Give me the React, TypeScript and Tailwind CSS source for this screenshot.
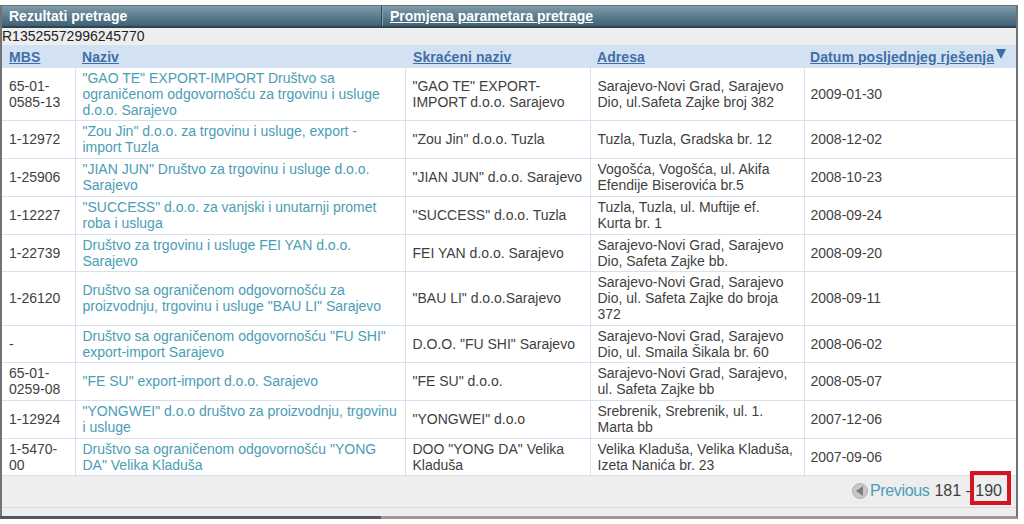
const rows = [
  { mbs: ["65-01-", "0585-13"], naziv: ['"GAO TE" EXPORT-IMPORT Društvo sa', "ograničenom odgovornošću za trgovinu i usluge", "d.o.o. Sarajevo"], skraceni: ['"GAO TE" EXPORT-', "IMPORT d.o.o. Sarajevo"], adresa: ["Sarajevo-Novi Grad, Sarajevo", "Dio, ul.Safeta Zajke broj 382"], datum: "2009-01-30", h: "h-[52px]" },
  { mbs: ["1-12972"], naziv: ['"Zou Jin" d.o.o. za trgovinu i usluge, export -', "import Tuzla"], skraceni: ['"Zou Jin" d.o.o. Tuzla'], adresa: ["Tuzla, Tuzla, Gradska br. 12"], datum: "2008-12-02", h: "h-[38px]" },
  { mbs: ["1-25906"], naziv: ['"JIAN JUN" Društvo za trgovinu i usluge d.o.o.', "Sarajevo"], skraceni: ['"JIAN JUN" d.o.o. Sarajevo'], adresa: ["Vogošća, Vogošća, ul. Akifa", "Efendije Biserovića br.5"], datum: "2008-10-23", h: "h-[38px]" },
  { mbs: ["1-12227"], naziv: ['"SUCCESS" d.o.o. za vanjski i unutarnji promet', "roba i usluga"], skraceni: ['"SUCCESS" d.o.o. Tuzla'], adresa: ["Tuzla, Tuzla, ul. Muftije ef.", "Kurta br. 1"], datum: "2008-09-24", h: "h-[38px]" },
  { mbs: ["1-22739"], naziv: ["Društvo za trgovinu i usluge FEI YAN d.o.o.", "Sarajevo"], skraceni: ["FEI YAN d.o.o. Sarajevo"], adresa: ["Sarajevo-Novi Grad, Sarajevo", "Dio, Safeta Zajke bb."], datum: "2008-09-20", h: "h-[37px]" },
  { mbs: ["1-26120"], naziv: ["Društvo sa ograničenom odgovornošću za", 'proizvodnju, trgovinu i usluge "BAU LI" Sarajevo'], skraceni: ['"BAU LI" d.o.o.Sarajevo'], adresa: ["Sarajevo-Novi Grad, Sarajevo", "Dio, ul. Safeta Zajke do broja", "372"], datum: "2008-09-11", h: "h-[54px]" },
  { mbs: ["-"], naziv: ['Društvo sa ograničenom odgovornošću "FU SHI"', "export-import Sarajevo"], skraceni: ['D.O.O. "FU SHI" Sarajevo'], adresa: ["Sarajevo-Novi Grad, Sarajevo", "Dio, ul. Smaila Šikala br. 60"], datum: "2008-06-02", h: "h-[37px]" },
  { mbs: ["65-01-", "0259-08"], naziv: ['"FE SU" export-import d.o.o. Sarajevo'], skraceni: ['"FE SU" d.o.o.'], adresa: ["Sarajevo-Novi Grad, Sarajevo,", "ul. Safeta Zajke bb"], datum: "2008-05-07", h: "h-[38px]" },
  { mbs: ["1-12924"], naziv: ['"YONGWEI" d.o.o društvo za proizvodnju, trgovinu', "i usluge"], skraceni: ['"YONGWEI" d.o.o'], adresa: ["Srebrenik, Srebrenik, ul. 1.", "Marta bb"], datum: "2007-12-06", h: "h-[38px]" },
  { mbs: ["1-5470-", "00"], naziv: ['Društvo sa ograničenom odgovornošću "YONG', 'DA" Velika Kladuša'], skraceni: ['DOO "YONG DA" Velika', "Kladuša"], adresa: ["Velika Kladuša, Velika Kladuša,", "Izeta Nanića br. 23"], datum: "2007-09-06", h: "h-[37px]" },
];

function Lines({ items }: { items: string[] }) {
  return (
    <>
      {items.map((t) => (
        <div key={t} className="whitespace-nowrap">{t}</div>
      ))}
    </>
  );
}

const thLink = "font-bold underline text-[#3f6ea6] whitespace-nowrap tracking-[0.08px]";
const td = "pl-[7px] pr-0 py-0 border-r border-[#d5e1ee] align-middle";

export default function App() {
  return (
    <main className="w-[1024px] h-[524px] bg-white pt-[5px] overflow-hidden font-['Liberation_Sans',Arial,sans-serif] text-[14px] leading-[16px] text-[#3f3f3f]">
      <div className="relative w-[1018px] h-[514px] border-2 border-t border-[#6e7478] border-b-[3px] border-b-[#9a9a9a] bg-[#eeeeee] flex flex-col">
        <div className="flex h-[22px] border-b-2 border-[#2f4350] bg-gradient-to-b from-[#7f9cab] to-[#3f6074] text-white font-bold leading-[20px] shrink-0">
          <div className="w-[380px] pl-[7px] border-r border-[#2f4350]">Rezultati pretrage</div>
          <div className="flex-1 pl-[7px] border-l border-[#8aa3b0] underline">Promjena parametara pretrage</div>
        </div>
        <div className="h-[17px] leading-[17px] shrink-0 text-[#222222]">R13525572996245770</div>
        <table className="w-[1014px] table-fixed border-collapse bg-white">
          <colgroup>
            <col className="w-[73px]" />
            <col className="w-[330px]" />
            <col className="w-[185px]" />
            <col className="w-[214px]" />
            <col className="w-[212px]" />
          </colgroup>
          <thead>
            <tr className="h-[23px] bg-[#d3e2f2] text-left">
              <th className="pl-[7px]"><span className={thLink}>MBS</span></th>
              <th className="pl-[7px]"><span className={thLink}>Naziv</span></th>
              <th className="pl-[8px]"><span className={thLink}>Skraćeni naziv</span></th>
              <th className="pl-[7px]"><span className={thLink}>Adresa</span></th>
              <th className="pl-[6px] whitespace-nowrap">
                <span className={thLink}>Datum posljednjeg rješenja</span>
                <svg className="inline-block ml-[2px] align-[3px]" width="10" height="10" viewBox="0 0 10 10"><path d="M0 0h10L5 10z" fill="#3f6ea6" /></svg>
              </th>
            </tr>
          </thead>
          <tbody>
            {rows.map((r) => (
              <tr key={r.datum} className={`${r.h} border-b border-[#d5e1ee]`}>
                <td className={td}><Lines items={r.mbs} /></td>
                <td className={`${td} text-[#4a9db5]`}><Lines items={r.naziv} /></td>
                <td className={td}><Lines items={r.skraceni} /></td>
                <td className={td}><Lines items={r.adresa} /></td>
                <td className="pl-[6px] align-middle">{r.datum}</td>
              </tr>
            ))}
          </tbody>
        </table>
        <div className="flex-1 flex items-start justify-end pt-[5px] pr-[14px] text-[16px] leading-[20px] border-b border-[#d9d9d9] mb-[8px]">
          <span className="w-[16px] h-[16px] rounded-full bg-[#c9c9c9] border border-[#b0b0b0] flex items-center justify-center mt-[2px] mr-[2px]">
            <svg width="8" height="10" viewBox="0 0 8 10"><path d="M7 0v10L0 5z" fill="#7d7d7d" /></svg>
          </span>
          <span className="text-[#4a9db5] tracking-[-0.35px]">Previous</span>
          <span className="ml-[5px]">181 - 190</span>
        </div>
        <div className="absolute left-[-2px] bottom-[-3px] w-[381px] h-[3px] bg-[#55595c]" />
        <div className="absolute right-[5px] bottom-[11px] w-[41px] h-[34px] border-[4px] border-[#d4141f]" />
      </div>
    </main>
  );
}
